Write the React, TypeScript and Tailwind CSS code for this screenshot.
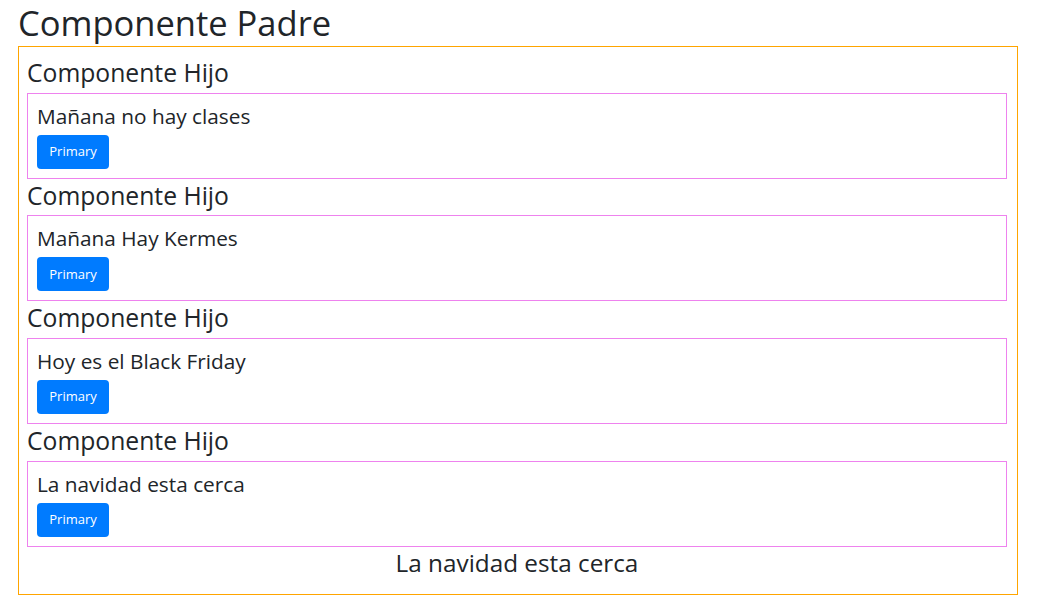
const mensajes = [
  'Mañana no hay clases',
  'Mañana Hay Kermes',
  'Hoy es el Black Friday',
  'La navidad esta cerca',
];

function Hijo({ mensaje }: { mensaje: string }) {
  return (
    <div>
      <h3 className="h-[36.7px] text-[24.7px] leading-[33px]">Componente Hijo</h3>
      <div className="border border-[#ee82ee] h-[86px] px-[9px] pt-[7px]">
        <h5 className="text-[20.8px] leading-[30px] mb-[4px]">{mensaje}</h5>
        <button className="w-[72px] h-[34px] rounded-[4px] bg-[#007bff] text-white text-[13px]">
          Primary
        </button>
      </div>
    </div>
  );
}

export default function App() {
  return (
    <div className="px-[18px] text-[#212529] font-['Open_Sans',sans-serif] bg-white min-h-screen">
      <h1 className="h-[46px] text-[34.5px] leading-[46px] font-medium">Componente Padre</h1>
      <div className="border border-[#ffa500] w-[1000px] h-[549px] pl-[8px] pr-[10px] pt-[9px]">
        {mensajes.map((m) => (
          <Hijo key={m} mensaje={m} />
        ))}
        <p className="text-center text-[24.3px] leading-[32px]">La navidad esta cerca</p>
      </div>
    </div>
  );
}
